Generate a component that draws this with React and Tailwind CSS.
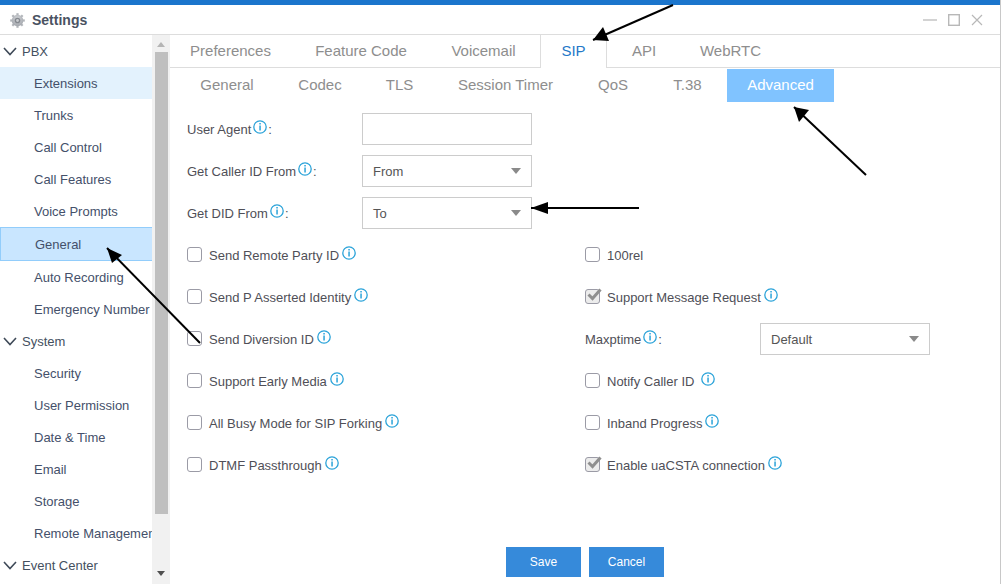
import React from 'react';

const sidebar = [
  { label: 'PBX', group: true },
  { label: 'Extensions', hover: true },
  { label: 'Trunks' },
  { label: 'Call Control' },
  { label: 'Call Features' },
  { label: 'Voice Prompts' },
  { label: 'General', active: true },
  { label: 'Auto Recording' },
  { label: 'Emergency Number' },
  { label: 'System', group: true },
  { label: 'Security' },
  { label: 'User Permission' },
  { label: 'Date & Time' },
  { label: 'Email' },
  { label: 'Storage' },
  { label: 'Remote Management' },
  { label: 'Event Center', group: true },
];

const mainTabs = [
  { label: 'Preferences', width: 'w-[121px]' },
  { label: 'Feature Code', width: 'w-[132px]' },
  { label: 'Voicemail', width: 'w-[105px]' },
  { label: 'SIP', width: 'w-[67px]' },
  { label: 'API', width: 'w-[66px]' },
  { label: 'WebRTC', width: 'w-[99px]' },
];

const subTabs = [
  { label: 'General', width: 'w-[94px]' },
  { label: 'Codec', width: 'w-[84px]' },
  { label: 'TLS', width: 'w-[67px]' },
  { label: 'Session Timer', width: 'w-[137px]' },
  { label: 'QoS', width: 'w-[70px]' },
  { label: 'T.38', width: 'w-[71px]' },
  { label: 'Advanced', width: 'w-[107px]' },
];

function InfoIcon({ className = '' }) {
  return (
    <svg className={`w-[14px] h-[14px] shrink-0 -translate-y-[2px] ${className}`} viewBox="0 0 14 14" fill="none">
      <circle cx="7" cy="7" r="6.2" stroke="#2ba3d9" strokeWidth="1.3" />
      <rect x="6.3" y="3" width="1.5" height="1.5" fill="#2ba3d9" />
      <rect x="6.3" y="5.5" width="1.5" height="5" fill="#2ba3d9" />
    </svg>
  );
}

function GearIcon() {
  const teeth = [0, 45, 90, 135];
  return (
    <svg className="w-[15px] h-[15px]" viewBox="0 0 16 16">
      <defs>
        <radialGradient id="gearFill" cx="50%" cy="35%" r="70%">
          <stop offset="0%" stopColor="#d4d6da" />
          <stop offset="100%" stopColor="#9ea2a8" />
        </radialGradient>
      </defs>
      {teeth.map((deg) => (
        <rect key={deg} x="6.8" y="0.2" width="2.4" height="15.6" fill="#b3b6bb" transform={`rotate(${deg} 8 8)`} />
      ))}
      <circle cx="8" cy="8" r="6.2" fill="url(#gearFill)" />
      <circle cx="8" cy="8" r="3" fill="#85898f" />
      <circle cx="8" cy="8" r="1.5" fill="#c9cbcf" />
    </svg>
  );
}

function GroupChevron() {
  return (
    <svg className="w-[14px] h-[9px] ml-[3px] mr-[5px] shrink-0" viewBox="0 0 14 9" fill="none">
      <path d="M1 1L7 7.5L13 1" stroke="#3f4a58" strokeWidth="1.6" />
    </svg>
  );
}

function Select({ value }) {
  return (
    <div className="w-[170px] h-8 border border-[#cccccc] bg-white flex items-center justify-between px-[10px]">
      <span className="text-[#555555] translate-y-px">{value}</span>
      <span className="w-0 h-0 border-x-[5.5px] border-x-transparent border-t-[6px] border-t-[#8a8a8a]" />
    </div>
  );
}

function FieldLabel({ label, gap = 'ml-[2px]' }) {
  return (
    <div className="w-[175px] flex items-center">
      <span className="translate-y-px">{label}</span>
      <InfoIcon className={gap} />
      <span className="ml-px translate-y-px">:</span>
    </div>
  );
}

function FieldRow({ label, gap, children }) {
  return (
    <div className="flex items-center h-8 mb-[10px]">
      <FieldLabel label={label} gap={gap} />
      {children}
    </div>
  );
}

function CheckRow({ label, checked, info = true, infoClass = 'ml-[3px]' }) {
  return (
    <div className="flex items-center h-8">
      <span className={`relative w-[15px] h-[15px] -translate-y-px rounded-[3px] border border-[#9b9ba6] shrink-0 ${checked ? 'bg-[#ececec]' : 'bg-white'}`}>
        {checked && (
          <svg className="absolute -top-[3px] left-0 w-[16px] h-[16px]" viewBox="0 0 16 16" fill="none">
            <path d="M2.5 7.5L6.5 11.5L14.5 2.5" stroke="#8f8f8f" strokeWidth="3" />
          </svg>
        )}
      </span>
      <span className="ml-[7px] translate-y-px">{label}</span>
      {info && <InfoIcon className={infoClass} />}
    </div>
  );
}

function Arrow({ from, to, a, b }) {
  return (
    <g>
      <line x1={from[0]} y1={from[1]} x2={to[0]} y2={to[1]} stroke="#000" strokeWidth="2" />
      <polygon points={`${to[0]},${to[1]} ${a[0]},${a[1]} ${b[0]},${b[1]}`} fill="#000" />
    </g>
  );
}

export default function App() {
  return (
    <div className="relative w-[1001px] h-[584px] overflow-hidden bg-white flex flex-col text-[13px] text-[#4d4d55] font-['Liberation_Sans',Arial,sans-serif] border-r border-[#c8c8c8]">
      <div className="h-[5px] bg-[#1b75cc] shrink-0" />

      <div className="h-[30px] shrink-0 flex items-center border-b border-[#dddddd] pt-px pl-[10px] pr-[17px]">
        <GearIcon />
        <span className="ml-[7px] text-[14px] font-bold text-[#4a5262]">Settings</span>
        <div className="ml-auto flex items-center gap-[11px]">
          <svg className="w-[14px] h-[12px]" viewBox="0 0 14 12"><path d="M0 6H14" stroke="#c4c4c4" strokeWidth="1.5" /></svg>
          <svg className="w-[12px] h-[12px]" viewBox="0 0 12 12" fill="none"><rect x="0.7" y="0.7" width="10.6" height="10.6" stroke="#b8b8b8" strokeWidth="1.4" /></svg>
          <svg className="w-[12px] h-[12px]" viewBox="0 0 12 12" fill="none"><path d="M1 1L11 11M11 1L1 11" stroke="#b8b8b8" strokeWidth="1.2" /></svg>
        </div>
      </div>

      <div className="flex-1 flex min-h-0">
        <div className="w-[152px] shrink-0 overflow-hidden text-[#44506a]">
          {sidebar.map((item) =>
            item.group ? (
              <div key={item.label} className="h-8 flex items-center whitespace-nowrap text-[#44505f]">
                <GroupChevron />
                <span className="translate-y-px">{item.label}</span>
              </div>
            ) : item.active ? (
              <div key={item.label} className="h-[34px] flex items-center pl-[34px] bg-[#c9e6ff] border border-[#92cdfb] border-r-0">
                <span className="translate-y-px">{item.label}</span>
              </div>
            ) : (
              <div key={item.label} className={`h-8 flex items-center pl-[34px] whitespace-nowrap ${item.hover ? 'bg-[#e3f2fd]' : ''}`}>
                <span className="translate-y-px">{item.label}</span>
              </div>
            )
          )}
        </div>

        <div className="w-[18px] shrink-0 bg-[#f1f1f1] flex flex-col items-center">
          <span className="mt-[7px] w-0 h-0 border-x-[4px] border-x-transparent border-b-[5px] border-b-[#b5b5b5]" />
          <div className="mt-[5px] w-[13px] h-[462px] bg-[#bfbfbf]" />
          <span className="mt-[57px] w-0 h-0 border-x-[4px] border-x-transparent border-t-[5px] border-t-[#505050]" />
        </div>

        <div className="flex-1 min-w-0 flex flex-col">
          <div className="h-[33px] shrink-0 flex gap-1 border-b border-[#dddddd] text-[15px] text-[#8e8e8e]">
            {mainTabs.map((tab) => (
              <div
                key={tab.label}
                className={`h-[33px] flex items-center justify-center ${tab.width} ${tab.label === 'SIP' ? 'bg-white text-[#2478c8] border-x border-[#dddddd]' : ''}`}
              >
                {tab.label}
              </div>
            ))}
          </div>

          <div className="h-[34px] shrink-0 pt-px ml-[10px] flex gap-1 text-[15px] text-[#8e8e8e]">
            {subTabs.map((tab) => (
              <div
                key={tab.label}
                className={`h-[33px] flex items-center justify-center ${tab.width} ${tab.label === 'Advanced' ? 'bg-[#80c3ff] text-white' : ''}`}
              >
                {tab.label}
              </div>
            ))}
          </div>

          <div className="pl-[17px] pt-[11px] text-[#4f4f57]">
            <FieldRow label="User Agent">
              <div className="w-[170px] h-8 border border-[#cccccc] bg-white" />
            </FieldRow>
            <FieldRow label="Get Caller ID From">
              <Select value="From" />
            </FieldRow>
            <FieldRow label="Get DID From">
              <Select value="To" />
            </FieldRow>

            <div className="grid grid-cols-[398px_1fr] gap-y-[10px]">
              <CheckRow label="Send Remote Party ID" />
              <CheckRow label="100rel" info={false} />
              <CheckRow label="Send P Asserted Identity" />
              <CheckRow label="Support Message Request" checked />
              <CheckRow label="Send Diversion ID" />
              <div className="flex items-center h-8">
                <FieldLabel label="Maxptime" />
                <Select value="Default" />
              </div>
              <CheckRow label="Support Early Media" />
              <CheckRow label="Notify Caller ID" infoClass="ml-[7px]" />
              <CheckRow label="All Busy Mode for SIP Forking" />
              <CheckRow label="Inband Progress" />
              <CheckRow label="DTMF Passthrough" />
              <CheckRow label="Enable uaCSTA connection" checked />
            </div>
          </div>

          <div className="mt-auto mb-[7px] ml-[336px] flex gap-2 text-[12px] text-white">
            <button className="w-[75px] h-[30px] bg-[#368ada]">Save</button>
            <button className="w-[75px] h-[30px] bg-[#368ada]">Cancel</button>
          </div>
        </div>
      </div>

      <svg className="absolute inset-0 w-[1001px] h-[584px] pointer-events-none" viewBox="0 0 1001 584">
        <Arrow from={[673, 5]} to={[593, 40]} a={[603, 27]} b={[609, 41]} />
        <Arrow from={[866, 175]} to={[794, 107]} a={[809, 110]} b={[799, 122]} />
        <Arrow from={[639, 208]} to={[531, 208]} a={[548, 202]} b={[548, 214]} />
        <Arrow from={[200, 343]} to={[107, 248]} a={[122, 255]} b={[112, 263]} />
      </svg>
    </div>
  );
}
